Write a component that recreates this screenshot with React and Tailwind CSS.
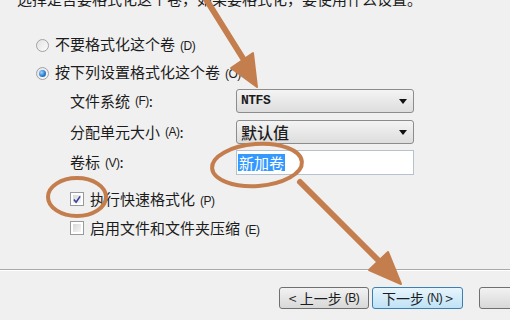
import React from "react";

const font = { fontFamily: '"Noto Sans CJK SC", "Liberation Sans", sans-serif' };

function Radio({ checked }) {
  return (
    <div className="w-[13px] h-[13px] rounded-full border border-[#a2a2a2] bg-gradient-to-br from-[#e2e2e2] to-[#fbfbfb] flex items-center justify-center">
      {checked && (
        <div className="w-[7px] h-[7px] rounded-full bg-[radial-gradient(circle_at_35%_35%,#9fd4ff,#2a7fd4_55%,#1b4f8f)]" />
      )}
    </div>
  );
}

function Check({ checked }) {
  return (
    <div className="w-[14px] h-[14px] border border-[#9a9a9a] bg-white p-[2px]">
      <div className="w-full h-full bg-gradient-to-br from-[#d8d8d8] to-[#f6f6f6] flex items-center justify-center">
        {checked && (
          <svg width="9" height="9" viewBox="0 0 9 9">
            <path d="M1 4.5 L3.5 7.5 L8 1" fill="none" stroke="#3a3f9a" strokeWidth="1.8" />
          </svg>
        )}
      </div>
    </div>
  );
}

function Key({ k, m = "ml-[5px]" }) {
  return <span className={"text-[12px] tracking-[-0.5px] " + m} style={{ fontFamily: '"Liberation Sans", sans-serif' }}>({k})</span>;
}

function Select({ children }) {
  return (
    <div className="w-[178px] h-[24px] rounded-[3px] border border-[#8c8c8c] bg-gradient-to-b from-[#f4f4f4] to-[#dddddd] flex items-center pl-[4px] pr-[6px]">
      <div className="flex-1 flex items-center">{children}</div>
      <svg width="8" height="5" viewBox="0 0 8 5">
        <path d="M0 0 L8 0 L4 5 Z" fill="#111" />
      </svg>
    </div>
  );
}

export default function App() {
  return (
    <div className="w-[510px] h-[320px] bg-[#f0f0f0] relative overflow-hidden text-[#1c1c1c] text-[15px]" style={font}>
      <div className="h-[16px] leading-[16px] -mt-[9px] pl-[17px] whitespace-nowrap">
        选择是否要格式化这个卷，如果要格式化，要使用什么设置。
      </div>

      <div className="mt-[28px] pl-[36px] flex flex-col gap-[8px]">
        <div className="h-[20px] flex items-center gap-[6px]">
          <Radio />
          <span className="leading-[20px]">不要格式化这个卷<Key k="D" /></span>
        </div>
        <div className="h-[20px] flex items-center gap-[6px]">
          <Radio checked />
          <span className="leading-[20px]">按下列设置格式化这个卷<Key k="O" /></span>
        </div>
      </div>

      <div className="mt-[6px] pl-[70px] grid grid-cols-[166px_178px] gap-y-[6px]">
        <div className="h-[24px] flex items-center">文件系统<Key k="F" />:</div>
        <Select>
          <span className="font-bold text-[13px] tracking-[-0.5px]" style={{ fontFamily: '"Liberation Mono", monospace' }}>NTFS</span>
        </Select>
        <div className="h-[24px] flex items-center mt-[1px]">分配单元大小<Key k="A" />:</div>
        <div className="mt-[1px]">
          <Select>
            <span className="text-[16px] leading-[18px] font-medium">默认值</span>
          </Select>
        </div>
        <div className="h-[25px] flex items-center">卷标<Key k="V" />:</div>
        <div className="w-[178px] h-[25px] border border-[#b5c2d0] bg-white flex items-center pl-[1px]">
          <span className="bg-[#3399ff] text-white leading-[17px] px-[1px]">新加卷</span>
        </div>
      </div>

      <div className="mt-[15px] pl-[70px] flex flex-col gap-[11px]">
        <div className="h-[18px] flex items-center gap-[6px]">
          <Check checked />
          <span>执行快速格式化<Key k="P" /></span>
        </div>
        <div className="h-[18px] flex items-center gap-[6px]">
          <Check />
          <span>启用文件和文件夹压缩<Key k="E" /></span>
        </div>
      </div>

      <div className="mt-[32px] h-[1px] bg-[#a9a9a9]" />
      <div className="h-[1px] bg-white" />

      <div className="mt-[16px] pl-[279px] flex items-center whitespace-nowrap">
        <button className="shrink-0 w-[90px] h-[22px] rounded-[3px] border border-[#707070] bg-gradient-to-b from-[#f2f2f2] to-[#d8d8d8] flex items-center justify-center text-[14px] leading-[20px]">
          &lt; 上一步<Key k="B" m="ml-[3px]" />
        </button>
        <button className="shrink-0 ml-[3px] w-[91px] h-[22px] rounded-[3px] border border-[#3c7fb1] bg-gradient-to-b from-[#e8f5fc] to-[#bfe2f6] flex items-center justify-center text-[14px] leading-[20px]">
          下一步<Key k="N" m="ml-[3px]" />&nbsp;&gt;
        </button>
        <button className="shrink-0 ml-[16px] w-[90px] h-[22px] rounded-[3px] border border-[#707070] bg-gradient-to-b from-[#f2f2f2] to-[#d8d8d8] flex items-center justify-center text-[14px] leading-[20px]">
          取消
        </button>
      </div>

      <svg className="absolute inset-0 pointer-events-none" width="510" height="320" viewBox="0 0 510 320">
        <g stroke="#c47e4e" fill="#c47e4e" strokeLinecap="round">
          <line x1="204" y1="-4" x2="244" y2="60" strokeWidth="6" />
          <polygon points="257,87 231,68 253,53" strokeWidth="2" strokeLinejoin="round" />
          <line x1="300" y1="182" x2="380" y2="262" strokeWidth="6" />
          <polygon points="401,284 369,270 388,252" strokeWidth="2" strokeLinejoin="round" />
          <ellipse cx="257" cy="165" rx="45" ry="21" fill="none" strokeWidth="4" transform="rotate(-4 257 165)" />
          <ellipse cx="77" cy="197" rx="29" ry="19" fill="none" strokeWidth="4" />
        </g>
      </svg>
    </div>
  );
}
